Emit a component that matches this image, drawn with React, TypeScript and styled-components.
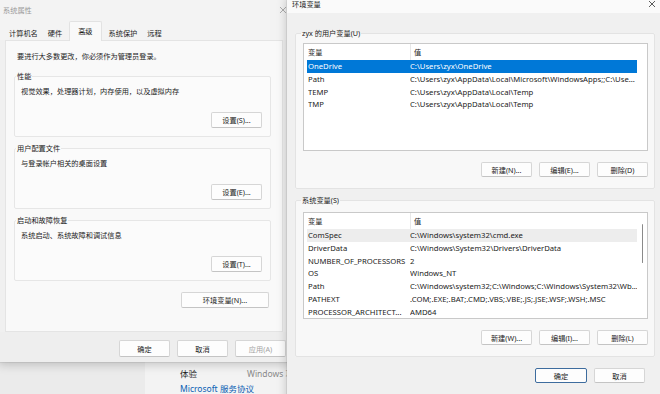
import React from "react";
import styled, { createGlobalStyle } from "styled-components";

const FONT = `"Noto Sans", "Noto Sans CJK SC", sans-serif`;

const GlobalStyle = createGlobalStyle`
  html, body {
    margin: 0;
    padding: 0;
  }
  body {
    font-family: ${FONT};
    font-size: 7.2px;
    color: #1b1b1b;
    overflow: hidden;
  }
`;

const Desktop = styled.div`
  position: relative;
  width: 660px;
  height: 394px;
  overflow: hidden;
  background: #f3f3f3;
`;

/* ---------- settings window in the back ---------- */

const SettingsWindow = styled.div`
  position: absolute;
  left: 0;
  top: 358px;
  width: 660px;
  height: 60px;
  display: grid;
  grid-template-columns: 145px 1fr;
  background: #f3f3f3;
`;

const NavPane = styled.div`
  background: #ebebeb;
`;

const SettingsContent = styled.div`
  padding: 10px 0 0 35px;
  font-size: 8.5px;
`;

const SettingRow = styled.div`
  display: grid;
  grid-template-columns: 67px 1fr;
  line-height: 12px;
`;

const SettingLabel = styled.span`
  color: #1b1b1b;
`;

const SettingValue = styled.span`
  color: #8a8a8a;
`;

const SettingLink = styled.div`
  margin-top: 2px;
  line-height: 14px;
  color: #0a5fb4;
`;

/* ---------- dialog windows ---------- */

const DialogWindow = styled.div<{ $x: number; $y: number; $w: number; $h: number }>`
  position: absolute;
  left: ${(p) => p.$x}px;
  top: ${(p) => p.$y}px;
  width: ${(p) => p.$w}px;
  height: ${(p) => p.$h}px;
  display: flex;
  flex-direction: column;
  background: #f0f0f0;
  box-shadow: 0 2px 10px rgba(0, 0, 0, 0.22), 0 0 0 1px rgba(0, 0, 0, 0.06);
`;

const TitleBar = styled.div<{ $active?: boolean; $h: number }>`
  flex: 0 0 ${(p) => p.$h}px;
  display: flex;
  align-items: center;
  justify-content: space-between;
  padding: 0 6px 0 5px;
  background: ${(p) => (p.$active ? "#fafafa" : "#f3f3f3")};
  color: ${(p) => (p.$active ? "#1b1b1b" : "#9a9a9a")};
`;

const CloseGlyph: React.FC<{ color: string }> = ({ color }) => (
  <svg width="8" height="8" viewBox="0 0 8 8">
    <path d="M1 1L7 7M7 1L1 7" stroke={color} strokeWidth="0.8" />
  </svg>
);

/* tabs */

const TabStrip = styled.div`
  flex: 0 0 20px;
  display: flex;
  align-items: flex-end;
  padding-left: 6px;
  background: #f3f3f3;
`;

const Tab = styled.div<{ $active?: boolean }>`
  position: relative;
  z-index: ${(p) => (p.$active ? 2 : 1)};
  height: ${(p) => (p.$active ? 19 : 16)}px;
  line-height: ${(p) => (p.$active ? 18 : 16)}px;
  padding: 0 ${(p) => (p.$active ? 8 : 4)}px;
  margin: 0 ${(p) => (p.$active ? 2 : 0)}px -1px;
  background: ${(p) => (p.$active ? "#f9f9f9" : "transparent")};
  border: 1px solid ${(p) => (p.$active ? "#e2e2e2" : "transparent")};
  border-bottom: none;
  border-radius: 2px 2px 0 0;
`;

const TabPanel = styled.div`
  flex: 0 0 292px;
  margin: 0 10px 0 7px;
  padding: 0 11px 0 8px;
  display: flex;
  flex-direction: column;
  background: #f9f9f9;
  border: 1px solid #e4e4e4;
  box-sizing: border-box;
`;

const Note = styled.div`
  margin: 10px 0 0 3px;
  line-height: 10px;
`;

/* group box */

const GroupBox = styled.fieldset<{ $top: number }>`
  margin: ${(p) => p.$top}px 0 0;
  padding: 0 8px 8px 6px;
  min-width: 0;
  border: 1px solid #e6e6e6;
  border-radius: 2px;
  background: #fbfbfb;
  display: flex;
  flex-direction: column;
`;

const GroupLegend = styled.legend`
  margin-left: -5px;
  padding: 0 1px;
  line-height: 10px;
`;

const GroupText = styled.div`
  margin-top: 5px;
  line-height: 10px;
`;

const ButtonRow = styled.div<{ $top: number; $gap?: number; $right?: number }>`
  display: flex;
  justify-content: flex-end;
  gap: ${(p) => p.$gap ?? 7}px;
  margin-top: ${(p) => p.$top}px;
  padding-right: ${(p) => p.$right ?? 0}px;
`;

const PushButton = styled.div<{ $w?: number; $h?: number; $default?: boolean; $disabled?: boolean }>`
  width: ${(p) => p.$w ?? 51}px;
  height: ${(p) => p.$h ?? 16}px;
  box-sizing: border-box;
  display: flex;
  align-items: center;
  justify-content: center;
  background: #fdfdfd;
  border: 1px solid ${(p) => (p.$default ? "#3d6c9e" : "#d6d6d6")};
  border-bottom-color: ${(p) => (p.$default ? "#3d6c9e" : "#c4c4c4")};
  border-radius: 2px;
  color: ${(p) => (p.$disabled ? "#a3a3a3" : "#1b1b1b")};
`;

const Footer = styled.div`
  flex: 1;
  display: flex;
  justify-content: flex-end;
  align-items: flex-start;
  gap: 7px;
  padding: 8px 7px 0 0;
  background: #eeeeee;
`;

/* env dialog */

const EnvBody = styled.div`
  flex: 1;
  padding: 0 7px 0 8px;
  display: flex;
  flex-direction: column;
`;

const EnvGroup = styled.fieldset<{ $top: number }>`
  margin: ${(p) => p.$top}px 0 0;
  padding: 0 6px 11px 7px;
  min-width: 0;
  border: 1px solid #e3e3e3;
  border-radius: 2px;
  background: #f8f8f8;
  display: flex;
  flex-direction: column;
`;

const EnvLegend = styled.legend`
  margin-left: -2px;
  padding: 0 1px;
  line-height: 10px;
`;

const ListView = styled.div<{ $h: number; $top: number }>`
  position: relative;
  height: ${(p) => p.$h}px;
  margin-top: ${(p) => p.$top}px;
  box-sizing: border-box;
  background: #ffffff;
  border: 1px solid #c9c9c9;
  overflow: hidden;
  font-size: 7.7px;
`;

const ListGrid = styled.div`
  display: grid;
  grid-template-columns: 102px 1fr;
`;

const ListHeader = styled(ListGrid)`
  height: 16px;
  align-items: center;
  padding-left: 4px;
  font-size: 7.2px;
`;

const HeaderCell = styled.div<{ $divider?: boolean }>`
  padding-left: ${(p) => (p.$divider ? 3 : 0)}px;
  line-height: 16px;
  border-left: ${(p) => (p.$divider ? "1px solid #e8e8e8" : "none")};
`;

const ListRow = styled(ListGrid)<{ $state?: "selected" | "hover" }>`
  height: 12.8px;
  line-height: 12.8px;
  margin: 0 10px 0 3px;
  padding-left: 1px;
  white-space: nowrap;
  background: ${(p) =>
    p.$state === "selected" ? "#0078d7" : p.$state === "hover" ? "#ededed" : "transparent"};
  color: ${(p) => (p.$state === "selected" ? "#ffffff" : "#1b1b1b")};
`;

const Cell = styled.div`
  overflow: hidden;
`;

const ScrollThumb = styled.div`
  position: absolute;
  right: 4px;
  top: 11px;
  width: 1.5px;
  height: 39px;
  border-radius: 1px;
  background: #8a8a8a;
`;

type Row = { name: string; value: string; state?: "selected" | "hover" };

const userVars: Row[] = [
  { name: "OneDrive", value: "C:\\Users\\zyx\\OneDrive", state: "selected" },
  { name: "Path", value: "C:\\Users\\zyx\\AppData\\Local\\Microsoft\\WindowsApps;;C:\\Use..." },
  { name: "TEMP", value: "C:\\Users\\zyx\\AppData\\Local\\Temp" },
  { name: "TMP", value: "C:\\Users\\zyx\\AppData\\Local\\Temp" },
];

const systemVars: Row[] = [
  { name: "ComSpec", value: "C:\\Windows\\system32\\cmd.exe", state: "hover" },
  { name: "DriverData", value: "C:\\Windows\\System32\\Drivers\\DriverData" },
  { name: "NUMBER_OF_PROCESSORS", value: "2" },
  { name: "OS", value: "Windows_NT" },
  { name: "Path", value: "C:\\Windows\\system32;C:\\Windows;C:\\Windows\\System32\\Wb..." },
  { name: "PATHEXT", value: ".COM;.EXE;.BAT;.CMD;.VBS;.VBE;.JS;.JSE;.WSF;.WSH;.MSC" },
  { name: "PROCESSOR_ARCHITECT...", value: "AMD64" },
];

const VarList: React.FC<{ rows: Row[]; h: number; top: number; scroll?: boolean }> = ({
  rows,
  h,
  top,
  scroll,
}) => (
  <ListView $h={h} $top={top}>
    <ListHeader>
      <HeaderCell>变量</HeaderCell>
      <HeaderCell $divider>值</HeaderCell>
    </ListHeader>
    {rows.map((r) => (
      <ListRow key={r.name} $state={r.state}>
        <Cell>{r.name}</Cell>
        <Cell>{r.value}</Cell>
      </ListRow>
    ))}
    {scroll && <ScrollThumb />}
  </ListView>
);

const groups = [
  { title: "性能", text: "视觉效果，处理器计划，内存使用，以及虚拟内存", button: "设置(S)..." },
  { title: "用户配置文件", text: "与登录帐户相关的桌面设置", button: "设置(E)..." },
  { title: "启动和故障恢复", text: "系统启动、系统故障和调试信息", button: "设置(T)..." },
];

const tabs = ["计算机名", "硬件", "高级", "系统保护", "远程"];

export default function App() {
  return (
    <Desktop>
      <GlobalStyle />

      <SettingsWindow>
        <NavPane />
        <SettingsContent>
          <SettingRow>
            <SettingLabel>体验</SettingLabel>
            <SettingValue>Windows 功能体验包</SettingValue>
          </SettingRow>
          <SettingLink>Microsoft 服务协议</SettingLink>
        </SettingsContent>
      </SettingsWindow>

      <DialogWindow $x={-2} $y={0} $w={295} $h={362}>
        <TitleBar $h={20}>
          <span>系统属性</span>
          <CloseGlyph color="#9a9a9a" />
        </TitleBar>
        <TabStrip>
          {tabs.map((t) => (
            <Tab key={t} $active={t === "高级"}>
              {t}
            </Tab>
          ))}
        </TabStrip>
        <TabPanel>
          <Note>要进行大多数更改，你必须作为管理员登录。</Note>
          {groups.map((g, i) => (
            <GroupBox key={g.title} $top={i === 0 ? 10 : 6}>
              <GroupLegend>{g.title}</GroupLegend>
              <GroupText>{g.text}</GroupText>
              <ButtonRow $top={16}>
                <PushButton>{g.button}</PushButton>
              </ButtonRow>
            </GroupBox>
          ))}
          <ButtonRow $top={11} $right={2}>
            <PushButton $w={88}>环境变量(N)...</PushButton>
          </ButtonRow>
        </TabPanel>
        <Footer>
          <PushButton $h={17}>确定</PushButton>
          <PushButton $h={17}>取消</PushButton>
          <PushButton $h={17} $disabled>
            应用(A)
          </PushButton>
        </Footer>
      </DialogWindow>

      <DialogWindow $x={287} $y={-5} $w={375} $h={410}>
        <TitleBar $active $h={18}>
          <span>环境变量</span>
          <CloseGlyph color="#333333" />
        </TitleBar>
        <EnvBody>
          <EnvGroup $top={15}>
            <EnvLegend>zyx 的用户变量(U)</EnvLegend>
            <VarList rows={userVars} h={108} top={5} />
            <ButtonRow $top={11}>
              <PushButton $h={15}>新建(N)...</PushButton>
              <PushButton $h={15}>编辑(E)...</PushButton>
              <PushButton $h={15}>删除(D)</PushButton>
            </ButtonRow>
          </EnvGroup>
          <EnvGroup $top={6}>
            <EnvLegend>系统变量(S)</EnvLegend>
            <VarList rows={systemVars} h={107} top={7} scroll />
            <ButtonRow $top={11}>
              <PushButton $h={15}>新建(W)...</PushButton>
              <PushButton $h={15}>编辑(I)...</PushButton>
              <PushButton $h={15}>删除(L)</PushButton>
            </ButtonRow>
          </EnvGroup>
          <ButtonRow $top={11} $right={10}>
            <PushButton $w={52} $h={15} $default>
              确定
            </PushButton>
            <PushButton $h={15}>取消</PushButton>
          </ButtonRow>
        </EnvBody>
      </DialogWindow>
    </Desktop>
  );
}
